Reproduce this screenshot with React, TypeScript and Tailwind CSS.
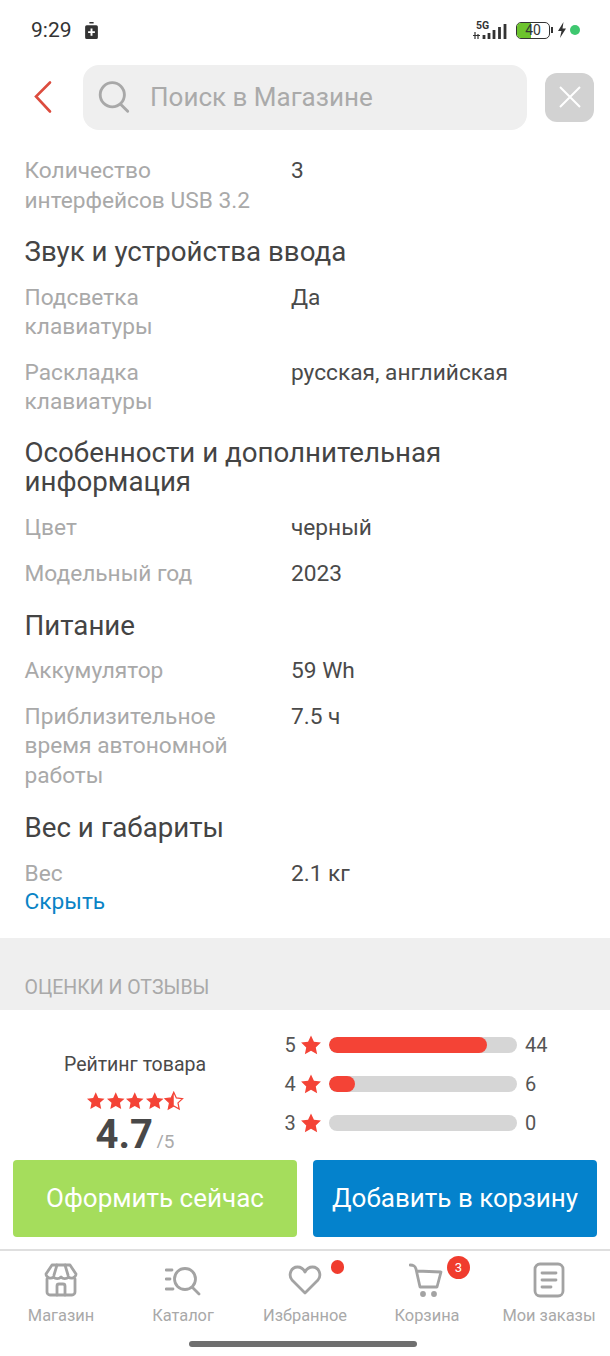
import React from "react";

const Star = ({ className }: { className: string }) => (
  <svg viewBox="0 0 24 24" className={className} fill="#f44336">
    <path d="M12 1.500l3.200 7 7.600.9-5.600 5.200 1.500 7.600L12 18.400l-6.700 3.800 1.500-7.600L1.200 9.400l7.600-.9z" />
  </svg>
);

const Row = ({ label, value, className = "" }: { label: React.ReactNode; value: string; className?: string }) => (
  <div className={`flex text-[22.700px] leading-[29.500px] ${className}`}>
    <div className="w-[266.500px] shrink-0 pr-2 text-[#a9a9a9]">{label}</div>
    <div className="text-[#4a4a4a]">{value}</div>
  </div>
);

const Title = ({ children, className = "" }: { children: React.ReactNode; className?: string }) => (
  <div className={`text-[27.700px] leading-[29.500px] text-[#444] ${className}`}>{children}</div>
);

const Bar = ({ n, pct, count }: { n: string; pct: string; count: string }) => (
  <div className="flex items-center h-[39px] text-[20px] text-[#555]">
    <span className="w-[12px] text-center">{n}</span>
    <Star className="w-[22px] h-[22px] ml-[4px]" />
    <div className="ml-[7px] w-[188px] h-[16px] rounded-full bg-[#d6d6d6] overflow-hidden">
      <div className={`h-full rounded-full bg-[#f44336] ${pct}`} />
    </div>
    <span className="ml-[8px]">{count}</span>
  </div>
);

const NavItem = ({ icon, label, extra }: { icon: React.ReactNode; label: string; extra?: React.ReactNode }) => (
  <div className="relative flex flex-col items-center w-[122px]">
    <div className="h-[36px] w-[36px]">{icon}</div>
    <div className="mt-[7px] text-[16.400px] leading-[22px] text-[#a9a9a9] whitespace-nowrap">{label}</div>
    {extra}
  </div>
);

const iconProps = {
  viewBox: "0 0 36 36",
  fill: "none",
  stroke: "#a3a3a3",
  strokeWidth: 2.800,
  strokeLinecap: "round" as const,
  strokeLinejoin: "round" as const,
  className: "w-[36px] h-[36px]",
};

export default function App() {
  return (
    <div className="relative w-[610px] h-[1356px] overflow-hidden bg-white font-['Roboto',sans-serif]">
      {/* status bar */}
      <div className="flex items-center h-[60px] pl-[31px] pr-[30px] text-[#333]">
        <span className="text-[21px] leading-none">9:29</span>
        <svg viewBox="0 0 12 16" className="ml-[13px] w-[13px] h-[17px]">
          <path d="M4 0h4v1.500H4zM1.500 3h9A1.500 1.500 0 0 1 12 4.500V14.500A1.500 1.500 0 0 1 10.500 16h-9A1.500 1.500 0 0 1 0 14.500V4.500A1.500 1.500 0 0 1 1.500 3z" fill="#333" />
          <path d="M6 6v7M2.800 9.500h6.400" stroke="#fff" strokeWidth="1.800" />
        </svg>
        <div className="ml-auto flex items-center">
          <svg viewBox="0 0 36 20" className="w-[36px] h-[20px]">
            <text x="3" y="9" fontSize="10.500" fontWeight="700" fill="#333" fontFamily="Roboto, sans-serif">5G</text>
            <path d="M2 12v7M5 14v5M0 15.500h7" stroke="#333" strokeWidth="1.200" />
            <path d="M11 15v4M16 13v6M21 10v9M26.500 7v12M32 4v15" stroke="#333" strokeWidth="2.800" />
          </svg>
          <div className="relative ml-[7px] w-[34px] h-[17px] rounded-[5px] border-[1.500px] border-[#333] overflow-hidden">
            <div className="h-full w-[14px] bg-[#6cc32d]" />
            <span className="absolute inset-0 text-center text-[14px] leading-[14px] text-[#333]">40</span>
          </div>
          <div className="ml-[1px] w-[2px] h-[6px] bg-[#333]" />
          <svg viewBox="0 0 10 16" className="ml-[4px] w-[10px] h-[16px]">
            <path d="M6.500 0L1 9h3.500L3 16l6-9.500H5.500z" fill="#333" />
          </svg>
          <div className="ml-[3px] w-[10px] h-[10px] rounded-full bg-[#3ec76f]" />
        </div>
      </div>

      {/* search */}
      <div className="flex items-center h-[76px] mt-[-1px]">
        <svg viewBox="0 0 20 34" className="ml-[33px] w-[20px] h-[34px]" fill="none" stroke="#dc4c3e" strokeWidth="2.600" strokeLinecap="round">
          <path d="M17 2.500L3 16.500l14 15" />
        </svg>
        <div className="ml-[30px] flex items-center w-[444px] h-[65px] rounded-[16px] bg-[#efefef]">
          <svg viewBox="0 0 30 30" className="ml-[15px] w-[33px] h-[33px]" fill="none" stroke="#a8a8a8" strokeWidth="2.600" strokeLinecap="round">
            <circle cx="13" cy="12.500" r="11" />
            <path d="M21 21.500l6 6" />
          </svg>
          <span className="ml-[19px] text-[26px] text-[#aaa]">Поиск в Магазине</span>
        </div>
        <div className="ml-[18px] flex items-center justify-center w-[49px] h-[49px] rounded-[12px] bg-[#d2d2d2]">
          <svg viewBox="0 0 22 22" className="w-[22px] h-[22px]" stroke="#fff" strokeWidth="2">
            <path d="M1 1l20 20M21 1L1 21" />
          </svg>
        </div>
      </div>

      {/* specs */}
      <div className="pl-[24.500px] pr-[25px] pt-[21px]">
        <Row label={<>Количество<br />интерфейсов USB 3.2</>} value="3" />
        <Title className="mt-[22px]">Звук и устройства ввода</Title>
        <Row className="mt-[16px]" label={<>Подсветка<br />клавиатуры</>} value="Да" />
        <Row className="mt-[16px]" label={<>Раскладка<br />клавиатуры</>} value="русская, английская" />
        <Title className="mt-[21px]">Особенности и дополнительная<br />информация</Title>
        <Row className="mt-[16px]" label="Цвет" value="черный" />
        <Row className="mt-[17px]" label="Модельный год" value="2023" />
        <Title className="mt-[22px]">Питание</Title>
        <Row className="mt-[16px]" label="Аккумулятор" value="59 Wh" />
        <Row className="mt-[16px]" label={<>Приблизительное<br />время автономной<br />работы</>} value="7.5 ч" />
        <Title className="mt-[23px]">Вес и габариты</Title>
        <Row className="mt-[16px]" label="Вес" value="2.1 кг" />
        <div className="mt-[1px] text-[22.700px] leading-[26px] text-[#0a84c6]">Скрыть</div>
      </div>

      {/* reviews */}
      <div className="mt-[23px] h-[72px] bg-[#efefef] pl-[24.500px] pt-[38px] text-[19.500px] leading-[24px] text-[#a9a9a9]">ОЦЕНКИ И ОТЗЫВЫ</div>
      <div className="flex pt-[15px]">
        <div className="w-[270px] flex flex-col items-center pt-[28px]">
          <div className="text-[19.500px] leading-[24px] text-[#4a4a4a]">Рейтинг товара</div>
          <div className="mt-[14px] flex">
            {[0, 1, 2, 3].map((i) => (
              <Star key={i} className="w-[19.500px] h-[19.500px]" />
            ))}
            <svg viewBox="0 0 24 24" className="w-[19.500px] h-[19.500px]">
              <path d="M12 1.500l3.200 7 7.600.9-5.600 5.200 1.500 7.600L12 18.400l-6.700 3.800 1.500-7.600L1.200 9.400l7.600-.9z" fill="none" stroke="#f44336" strokeWidth="1.500" />
              <path d="M12 1.500v16.900l-6.700 3.800 1.500-7.600L1.200 9.400l7.600-.9z" fill="#f44336" />
            </svg>
          </div>
          <div className="mt-[2px] flex items-baseline">
            <span className="text-[40px] leading-[44px] font-bold text-[#484848]">4.7</span>
            <span className="ml-[3px] text-[19px] text-[#aaa]">/5</span>
          </div>
        </div>
        <div className="ml-[14px]">
          <Bar n="5" pct="w-[84%]" count="44" />
          <Bar n="4" pct="w-[14%]" count="6" />
          <Bar n="3" pct="w-0" count="0" />
        </div>
      </div>

      {/* bottom overlay */}
      <div className="absolute left-0 right-0 bottom-0 h-[208px] bg-white">
        <div className="flex gap-[16px] px-[13px] pt-[12px]">
          <div className="flex items-center justify-center w-[284px] h-[77px] rounded-[4px] bg-[#a5dd5c] text-[26px] text-white">Оформить сейчас</div>
          <div className="flex items-center justify-center w-[284px] h-[77px] rounded-[4px] bg-[#0482cc] text-[26px] text-white">Добавить в корзину</div>
        </div>
        <div className="mt-[12px] h-[2px] bg-[#dfdfdf]" />
        <div className="flex pt-[11px]">
          <NavItem
            label="Магазин"
            icon={
              <svg {...iconProps}>
                <path d="M4 17v13a3 3 0 0 0 3 3h22a3 3 0 0 0 3-3V17" />
                <path d="M9 3h18l6 9a4.500 4.500 0 0 1-7.500 3 5 5 0 0 1-7.500 0 5 5 0 0 1-7.500 0A4.500 4.500 0 0 1 3 12z" />
                <path d="M14 3l-3 10M22 3l3 10M14 33V24a2 2 0 0 1 2-2h4a2 2 0 0 1 2 2v9" />
              </svg>
            }
          />
          <NavItem
            label="Каталог"
            icon={
              <svg {...iconProps}>
                <circle cx="20" cy="17" r="10.500" />
                <path d="M28 26l6 6M1 8h6M1 17h4M1 27h7" />
              </svg>
            }
          />
          <NavItem
            label="Избранное"
            icon={
              <svg {...iconProps}>
                <path d="M18 31L5 18C1 13 4 5 10.500 5c3.500 0 6 2 7.500 5 1.500-3 4-5 7.500-5C32 5 35 13 31 18z" />
              </svg>
            }
            extra={<div className="absolute left-[87px] top-[-2px] w-[13px] h-[14px] rounded-full bg-[#f03c2e]" />}
          />
          <NavItem
            label="Корзина"
            icon={
              <svg {...iconProps}>
                <path d="M1 3c4 0 5 1 6 4l4 18h17l4-15-24-1" />
                <circle cx="14" cy="32" r="1.500" fill="#a3a3a3" />
                <circle cx="25" cy="32" r="1.500" fill="#a3a3a3" />
              </svg>
            }
            extra={
              <div className="absolute left-[81px] top-[-6px] flex items-center justify-center w-[23px] h-[23px] rounded-full bg-[#f03c2e] text-[13px] text-white">3</div>
            }
          />
          <NavItem
            label="Мои заказы"
            icon={
              <svg {...iconProps}>
                <rect x="4" y="2" width="28" height="32" rx="5" />
                <path d="M11 11h14M11 18h14M11 25h9" />
              </svg>
            }
          />
        </div>
        <div className="absolute left-[189px] bottom-[9px] w-[228px] h-[6px] rounded-full bg-[#6f6f6f]" />
      </div>
    </div>
  );
}
